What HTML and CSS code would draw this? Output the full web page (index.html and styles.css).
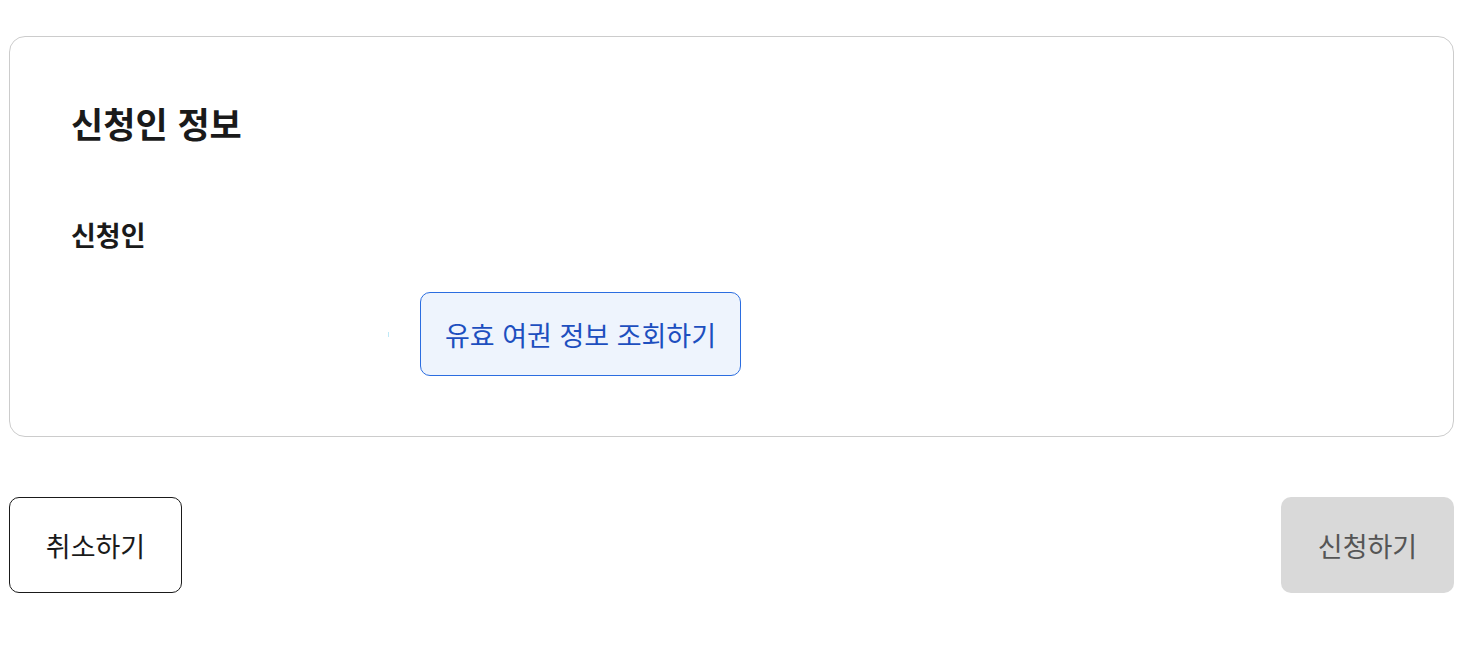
FILE: index.html
```html
<!DOCTYPE html>
<html lang="ko">
<head>
<meta charset="utf-8">
<link rel="stylesheet" href="styles.css">
</head>
<body>
<div class="page">
  <section class="card">
    <h2 class="card-title">신청인 정보</h2>
    <h3 class="field-label">신청인</h3>
    <div class="field-row">
      <span class="field-mark"></span>
      <button class="lookup-btn" type="button">유효 여권 정보 조회하기</button>
    </div>
  </section>
  <div class="actions">
    <button class="btn btn-cancel" type="button">취소하기</button>
    <button class="btn btn-submit" type="button">신청하기</button>
  </div>
</div>
</body>
</html>
```
FILE: styles.css
```css
html, body {
  margin: 0;
  padding: 0;
  background: #fff;
}
body {
  font-family: "Noto Sans CJK KR", "Noto Sans", sans-serif;
  color: #1a1a1a;
}
.page {
  width: 1445px;
  margin-left: 9px;
  padding-top: 36px;
}
.card {
  box-sizing: border-box;
  height: 401px;
  border: 1px solid #cccccc;
  border-radius: 16px;
  padding: 60px 60px 60px 61px;
}
.card-title {
  margin: 0;
  font-size: 35px;
  font-weight: 700;
  line-height: 52px;
  color: #1a1a1a;
}
.field-label {
  margin: 66px 0 0;
  font-size: 27px;
  font-weight: 700;
  line-height: 40px;
  color: #1a1a1a;
}
.field-row {
  display: flex;
  align-items: center;
  margin-top: 37px;
}
.field-mark {
  width: 1px;
  height: 5px;
  background: #bfe9f7;
  margin-left: 317px;
  margin-right: 31px;
}
.lookup-btn {
  box-sizing: border-box;
  width: 321px;
  height: 84px;
  padding: 0;
  border: 1px solid #2b6de0;
  border-radius: 10px;
  background: #eef4fd;
  color: #1d4fbf;
  font-family: inherit;
  font-size: 27px;
  font-weight: 400;
}
.actions {
  display: flex;
  justify-content: space-between;
  margin-top: 60px;
}
.btn {
  box-sizing: border-box;
  width: 173px;
  height: 96px;
  border-radius: 10px;
  font-family: inherit;
  font-size: 27px;
  font-weight: 400;
}
.btn-cancel {
  background: #fff;
  border: 1px solid #1a1a1a;
  color: #1a1a1a;
}
.btn-submit {
  background: #d9d9d9;
  border: none;
  color: #555;
}
```
